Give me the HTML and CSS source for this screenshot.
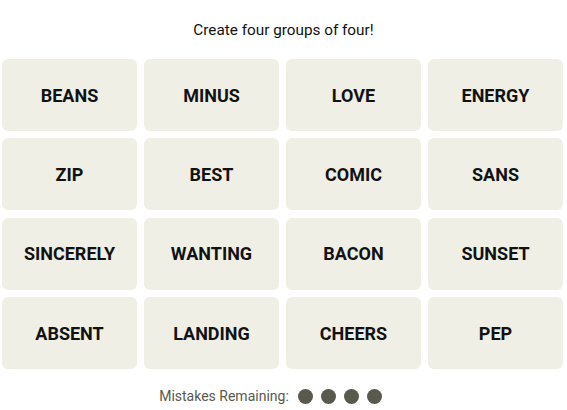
FILE: index.html
```html
<!DOCTYPE html>
<html lang="en">
<head>
    <meta charset="UTF-8">
    <meta name="viewport" content="width=device-width, initial-scale=1.0">
    <title>Connections</title>
    <link rel="stylesheet" href="styles.css">
</head>
<body>
    <div class="main">
        <p class="prompt">Create four groups of four!</p>
        <div class="board">
            <button class="tile">BEANS</button>
            <button class="tile">MINUS</button>
            <button class="tile">LOVE</button>
            <button class="tile">ENERGY</button>
            <button class="tile">ZIP</button>
            <button class="tile">BEST</button>
            <button class="tile">COMIC</button>
            <button class="tile">SANS</button>
            <button class="tile">SINCERELY</button>
            <button class="tile">WANTING</button>
            <button class="tile">BACON</button>
            <button class="tile">SUNSET</button>
            <button class="tile">ABSENT</button>
            <button class="tile">LANDING</button>
            <button class="tile">CHEERS</button>
            <button class="tile">PEP</button>
        </div>
        <div class="mistakes">
            <span class="label">Mistakes Remaining:</span>
            <span class="dots">
                <span class="dot"></span>
                <span class="dot"></span>
                <span class="dot"></span>
                <span class="dot"></span>
            </span>
        </div>
    </div>
</body>
</html>
```

FILE: styles.css
```css
*{
    padding: 0;
    margin: 0;
    box-sizing: border-box;
}
body{
    background: #fff;
    font-family: Roboto, "Liberation Sans", sans-serif;
    overflow: hidden;
}
.main{
    width: 567px;
    height: 410px;
}
.prompt{
    height: 59px;
    line-height: 60px;
    text-align: center;
    font-size: 15.3px;
    color: #121212;
}
.board{
    display: grid;
    grid-template-columns: repeat(4, 135px);
    grid-auto-rows: 72px;
    column-gap: 7px;
    row-gap: 7.4px;
    padding-left: 2px;
}
.tile{
    border: none;
    outline: none;
    border-radius: 6px;
    background-color: #efefe6;
    color: #121212;
    font-family: Roboto, "Liberation Sans", sans-serif;
    font-weight: 700;
    font-size: 18px;
    text-transform: uppercase;
}
.mistakes{
    display: flex;
    justify-content: center;
    align-items: center;
    gap: 9px;
    margin-top: 18px;
    padding-right: 26px;
    height: 18px;
}
.label{
    font-size: 14px;
    color: #5a594e;
}
.dots{
    display: flex;
    gap: 8px;
}
.dot{
    width: 15px;
    height: 15px;
    border-radius: 50%;
    background-color: #5a594e;
}
```
